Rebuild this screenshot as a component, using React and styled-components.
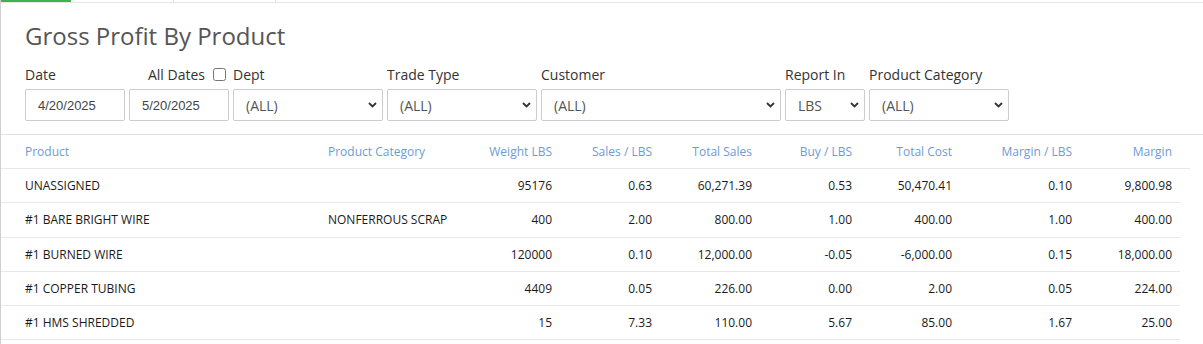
import React from "react";
import styled, { createGlobalStyle } from "styled-components";

const GlobalStyle = createGlobalStyle`
  body {
    margin: 0;
    background: #fff;
    font-family: "Open Sans", "Liberation Sans", sans-serif;
  }
`;

const Page = styled.div`
  border-left: 1px solid #cfcfcf;
  min-height: 344px;
`;

const TabBar = styled.div`
  display: flex;
  height: 2px;
  border-bottom: 1px solid #e6e6e6;
`;

const Tab = styled.div`
  width: ${(p) => p.w}px;
  background: ${(p) => (p.active ? "#3cb44b" : "transparent")};
  border-right: ${(p) => (p.active ? "none" : "1px solid #e0e0e0")};
`;

const Header = styled.div`
  padding: 17px 24px 13px;
  border-bottom: 1px solid #e2e2e2;
`;

const Title = styled.h1`
  margin: 0;
  font-size: 24px;
  line-height: 31px;
  font-weight: 400;
  color: #555;
`;

const Filters = styled.div`
  display: flex;
  gap: 4px;
  margin-top: 13px;
`;

const Field = styled.div`
  display: flex;
  flex-direction: column;
  width: ${(p) => p.w}px;
`;

const Label = styled.label`
  display: flex;
  align-items: center;
  justify-content: ${(p) => (p.end ? "flex-end" : "flex-start")};
  gap: 8px;
  height: 20px;
  margin-bottom: 5px;
  padding-right: ${(p) => (p.end ? "3px" : "0")};
  font-size: 14px;
  color: #333;
  white-space: nowrap;
`;

const Check = styled.input`
  width: 13px;
  height: 13px;
  margin: 0;
`;

const TextInput = styled.input`
  box-sizing: border-box;
  width: 100%;
  height: 32px;
  padding: 0 12px;
  border: 1px solid #ccc;
  border-radius: 2px;
  font-family: "Liberation Sans", Arial, sans-serif;
  font-size: 13px;
  color: #444;
  outline: none;
`;

const SelectWrap = styled.div`
  position: relative;
  height: 32px;
`;

const Select = styled.select`
  box-sizing: border-box;
  width: 100%;
  height: 32px;
  padding: 0 22px 0 12px;
  border: 1px solid #ccc;
  border-radius: 2px;
  background: #fff;
  appearance: none;
  font-family: "Open Sans", sans-serif;
  font-size: 14px;
  color: #555;
  outline: none;
`;

const Chevron = styled.svg`
  position: absolute;
  right: 6px;
  top: 13px;
  width: 9px;
  height: 6px;
  pointer-events: none;
`;

const Row = styled.div`
  display: grid;
  grid-template-columns: 319px 140px 100px 100px 100px 100px 100px 120px 100px ${(p) =>
      p.head ? "10px" : ""};
  width: ${(p) => (p.head ? 1189 : 1179)}px;
  height: ${(p) => (p.head ? 33 : 33.25)}px;
  align-items: center;
  border-bottom: 1px solid #e8e8e8;
  font-size: 12px;
  color: ${(p) => (p.head ? "#6e9bd6" : "#1a1a1a")};
`;

const Cell = styled.div`
  padding: 0 8px;
  text-align: ${(p) => (p.num ? "right" : "left")};
  white-space: nowrap;

  &:first-child {
    padding-left: 24px;
  }
`;

const ChevronIcon = () => (
  <Chevron viewBox="0 0 9 6">
    <path d="M1 1l3.5 3.5L8 1" fill="none" stroke="#333" strokeWidth="1.8" />
  </Chevron>
);

const Dropdown = ({ value }) => (
  <SelectWrap>
    <Select defaultValue={value}>
      <option>{value}</option>
    </Select>
    <ChevronIcon />
  </SelectWrap>
);

const columns = [
  "Product",
  "Product Category",
  "Weight LBS",
  "Sales / LBS",
  "Total Sales",
  "Buy / LBS",
  "Total Cost",
  "Margin / LBS",
  "Margin",
];

const rows = [
  ["UNASSIGNED", "", "95176", "0.63", "60,271.39", "0.53", "50,470.41", "0.10", "9,800.98"],
  ["#1 BARE BRIGHT WIRE", "NONFERROUS SCRAP", "400", "2.00", "800.00", "1.00", "400.00", "1.00", "400.00"],
  ["#1 BURNED WIRE", "", "120000", "0.10", "12,000.00", "-0.05", "-6,000.00", "0.15", "18,000.00"],
  ["#1 COPPER TUBING", "", "4409", "0.05", "226.00", "0.00", "2.00", "0.05", "224.00"],
  ["#1 HMS SHREDDED", "", "15", "7.33", "110.00", "5.67", "85.00", "1.67", "25.00"],
];

const App = () => {
  return (
    <>
      <GlobalStyle />
      <Page>
        <TabBar>
          <Tab w={70} active />
          <Tab w={102} />
          <Tab w={101} />
        </TabBar>
        <Header>
          <Title>Gross Profit By Product</Title>
          <Filters>
            <Field w={100}>
              <Label>Date</Label>
              <TextInput defaultValue="4/20/2025" />
            </Field>
            <Field w={100}>
              <Label end>
                All Dates <Check type="checkbox" />
              </Label>
              <TextInput defaultValue="5/20/2025" />
            </Field>
            <Field w={150}>
              <Label>Dept</Label>
              <Dropdown value="(ALL)" />
            </Field>
            <Field w={150}>
              <Label>Trade Type</Label>
              <Dropdown value="(ALL)" />
            </Field>
            <Field w={240}>
              <Label>Customer</Label>
              <Dropdown value="(ALL)" />
            </Field>
            <Field w={80}>
              <Label>Report In</Label>
              <Dropdown value="LBS" />
            </Field>
            <Field w={140}>
              <Label>Product Category</Label>
              <Dropdown value="(ALL)" />
            </Field>
          </Filters>
        </Header>
        <Row head>
          {columns.map((c, i) => (
            <Cell key={c} num={i > 1}>
              {c}
            </Cell>
          ))}
          <div />
        </Row>
        {rows.map((r, k) => (
          <Row key={k}>
            {r.map((v, i) => (
              <Cell key={i} num={i > 1}>
                {v}
              </Cell>
            ))}
          </Row>
        ))}
      </Page>
    </>
  );
};

export default App;
